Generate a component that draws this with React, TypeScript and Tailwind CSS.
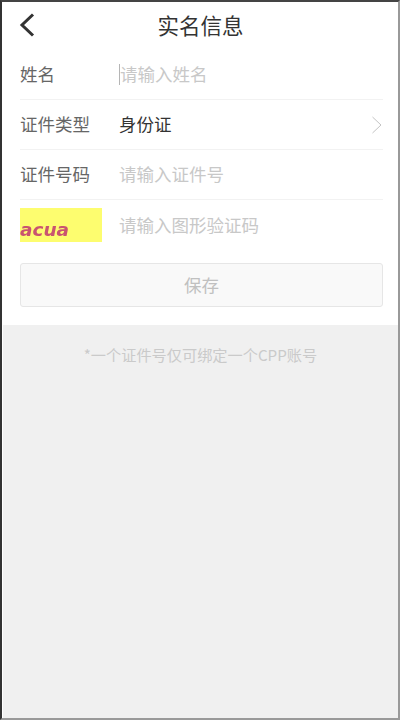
const font = "[font-family:'Noto_Sans_CJK_SC','Liberation_Sans',sans-serif]";

function Row({ label, children }: { label: React.ReactNode; children: React.ReactNode }) {
  return (
    <div className="flex h-[50px] items-center border-b border-[#f2f2f2]">
      <div className="w-[99px] shrink-0 text-[17.5px] text-[#666666]">{label}</div>
      {children}
    </div>
  );
}

export default function App() {
  return (
    <div className={`flex h-[720px] w-[400px] flex-col overflow-hidden border-2 border-b-[#999999] border-l-[#333333] border-r-[#999999] border-t-[#444444] bg-white ${font}`}>
      <div className="pb-[18px]">
        <div className="relative flex h-[48px] items-center justify-center pb-[2px] pl-px">
          <svg className="absolute left-[16px] top-[10px]" width="18" height="26" viewBox="0 0 18 26" fill="none">
            <path d="M15 2.5 L4 13 L15 23.5" stroke="#333333" strokeWidth="3" />
          </svg>
          <span className="text-[21.5px] text-[#333333]">实名信息</span>
        </div>
        <div className="ml-[18px] mr-[15px]">
          <Row label="姓名">
            <span className="h-[21px] w-px bg-[#b5b5b5]" />
            <span className="text-[17.5px] text-[#c8c8c8]">请输入姓名</span>
          </Row>
          <Row label="证件类型">
            <span className="flex-1 text-[17.5px] text-[#333333]">身份证</span>
            <svg width="12" height="18" viewBox="0 0 12 18" fill="none">
              <path d="M1.5 1 L10 9 L1.5 17" stroke="#c4c4c4" strokeWidth="1" />
            </svg>
          </Row>
          <Row label="证件号码">
            <span className="text-[17.5px] text-[#c8c8c8]">请输入证件号</span>
          </Row>
          <div className="flex h-[50px] items-center">
            <div className="flex h-[34px] w-[82px] shrink-0 items-end overflow-hidden bg-[#fdfd6f]">
              <span className="text-[18.5px] font-bold italic leading-[24px] text-[#c95470] blur-[0.4px] [font-family:'DejaVu_Sans',sans-serif]">acua</span>
            </div>
            <span className="ml-[17px] text-[17.5px] text-[#c8c8c8]">请输入图形验证码</span>
          </div>
          <div className="mt-[13px] flex h-[44px] items-center justify-center rounded-[3px] border border-[#e6e6e6] bg-[#f9f9f9] text-[17.5px] text-[#c0c0c0]">
            保存
          </div>
        </div>
      </div>
      <div className="ml-px flex-1 bg-[#f0f0f0] pt-[18px] text-center text-[15.2px] text-[#cacaca]">*一个证件号仅可绑定一个CPP账号</div>
    </div>
  );
}
